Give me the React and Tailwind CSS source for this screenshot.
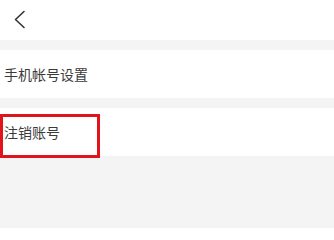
const font = { fontFamily: '"Noto Sans CJK SC", "Liberation Sans", sans-serif' };

const BackIcon = () => (
  <svg width="14" height="20" viewBox="0 0 14 20" fill="none">
    <polyline
      points="11,1.5 2.5,9.5 11,17.5"
      stroke="#333"
      strokeWidth="1.6"
      strokeLinecap="round"
      strokeLinejoin="round"
    />
  </svg>
);

const Row = ({ label, children }) => (
  <div className="relative flex h-[48px] items-center bg-white pl-[4px] text-[14px] text-[#3a3a3a]">
    <span>{label}</span>
    {children}
  </div>
);

const App = () => {
  return (
    <div className="flex h-[228px] w-[334px] flex-col bg-[#f4f4f4]" style={font}>
      <div className="flex h-[40px] items-center bg-white pl-[13px]">
        <BackIcon />
      </div>
      <div className="mt-[10px]">
        <Row label="手机帐号设置" />
      </div>
      <div className="mt-[10px]">
        <Row label="注销账号">
          {/* annotation box */}
          <div className="absolute left-0 top-[6px] h-[44px] w-[100px] border-[3px] border-[#e0141a]" />
        </Row>
      </div>
    </div>
  );
};

export default App;
